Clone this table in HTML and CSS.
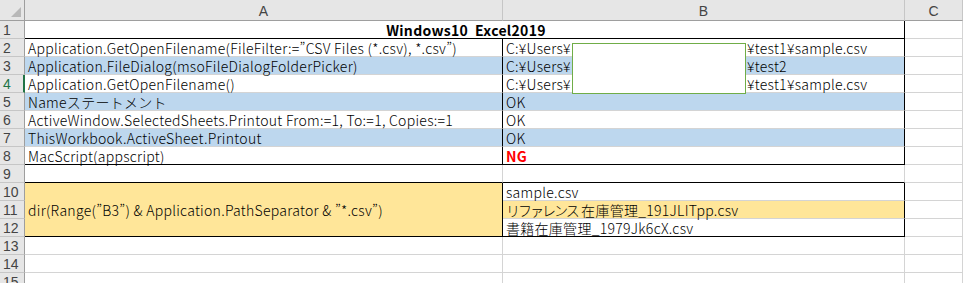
FILE: index.html
```html
<!DOCTYPE html>
<html lang="ja">
<head>
<meta charset="utf-8">
<link rel="stylesheet" href="styles.css">
</head>
<body>
<div class="sheet">
  <div class="grid">
    <div class="hd corner"><span class="tri"></span></div>
    <div class="hd col">A</div>
    <div class="hd col">B</div>
    <div class="hd col">C</div>

    <div class="hd rn">1</div>
    <div class="c title span2 bb br">Windows10&nbsp; Excel2019</div>
    <div class="c"></div>

    <div class="hd rn">2</div>
    <div class="c br">Application.GetOpenFilename(FileFilter:=”CSV Files (*.csv), *.csv”)</div>
    <div class="c br"><span class="lead">C:¥Users¥</span><span>¥test1¥sample.csv</span></div>
    <div class="c"></div>

    <div class="hd rn">3</div>
    <div class="c br blue">Application.FileDialog(msoFileDialogFolderPicker)</div>
    <div class="c br blue"><span class="lead">C:¥Users¥</span><span>¥test2</span></div>
    <div class="c"></div>

    <div class="hd rn sel">4</div>
    <div class="c br">Application.GetOpenFilename()</div>
    <div class="c br"><span class="lead">C:¥Users¥</span><span>¥test1¥sample.csv</span></div>
    <div class="c"></div>

    <div class="hd rn">5</div>
    <div class="c br blue">Nameステートメント</div>
    <div class="c br blue">OK</div>
    <div class="c"></div>

    <div class="hd rn">6</div>
    <div class="c br">ActiveWindow.SelectedSheets.Printout From:=1, To:=1, Copies:=1</div>
    <div class="c br">OK</div>
    <div class="c"></div>

    <div class="hd rn">7</div>
    <div class="c br blue">ThisWorkbook.ActiveSheet.Printout</div>
    <div class="c br blue">OK</div>
    <div class="c"></div>

    <div class="hd rn">8</div>
    <div class="c br bb">MacScript(appscript)</div>
    <div class="c br bb ng">NG</div>
    <div class="c"></div>

    <div class="hd rn">9</div>
    <div class="c bb"></div>
    <div class="c bb"></div>
    <div class="c"></div>

    <div class="hd rn">10</div>
    <div class="c br bb yellow merged">dir(Range(”B3”) &amp; Application.PathSeparator &amp; ”*.csv”)</div>
    <div class="c br">sample.csv</div>
    <div class="c"></div>

    <div class="hd rn">11</div>
    <div class="c br yellow"><span class="kana">リファレンス</span>&nbsp;在庫管理_191JLITpp.csv</div>
    <div class="c"></div>

    <div class="hd rn">12</div>
    <div class="c br bb">書籍在庫管理_1979Jk6cX.csv</div>
    <div class="c"></div>

    <div class="hd rn">13</div>
    <div class="c"></div>
    <div class="c"></div>
    <div class="c"></div>

    <div class="hd rn">14</div>
    <div class="c"></div>
    <div class="c"></div>
    <div class="c"></div>

    <div class="hd rn">15</div>
    <div class="c"></div>
    <div class="c"></div>
    <div class="c"></div>
  </div>
  <div class="paste"></div>
</div>
</body>
</html>
```

FILE: styles.css
```css
html, body {
  margin: 0;
  padding: 0;
  background: #ffffff;
}

body {
  font-family: "Noto Sans CJK JP", "Liberation Sans", sans-serif;
  font-size: 14px;
  font-weight: 300;
  color: #000;
}

.sheet {
  position: relative;
  width: 963px;
  height: 283px;
  overflow: hidden;
}

.grid {
  display: grid;
  grid-template-columns: 25px 478px 402px 1fr;
  grid-template-rows: 21px repeat(15, 18px);
}

.hd {
  background: #e6e6e6;
  color: #444;
  box-sizing: border-box;
  display: flex;
  align-items: center;
  justify-content: center;
  font-family: "Liberation Sans", sans-serif;
  font-weight: 400;
  font-size: 14px;
  line-height: 16px;
}

.corner {
  border-right: 1px solid #9e9e9e;
  border-bottom: 1px solid #9e9e9e;
  position: relative;
}

.tri {
  position: absolute;
  right: 3px;
  bottom: 3px;
  width: 0;
  height: 0;
  border-left: 10px solid transparent;
  border-bottom: 10px solid #b8b8b8;
}

.col {
  border-right: 1px solid #c6c6c6;
  border-bottom: 1px solid #9e9e9e;
  padding-top: 2px;
}

.rn {
  border-right: 1px solid #9e9e9e;
  border-bottom: 1px solid #c6c6c6;
  justify-content: flex-start;
  padding-left: 3px;
  padding-top: 1px;
}

.rn.sel {
  color: #217346;
  border-right: 2px solid #217346;
}

.c {
  box-sizing: border-box;
  border-right: 1px solid #d4d4d4;
  border-bottom: 1px solid #d4d4d4;
  padding-left: 3px;
  line-height: 16px;
  letter-spacing: 0.28px;
  white-space: nowrap;
  display: flex;
  align-items: center;
}

.span2 {
  grid-column: span 2;
}

.title {
  justify-content: center;
  font-weight: bold;
  font-size: 14px;
  letter-spacing: 0.3px;
}

.br {
  border-right-color: #000;
}

.bb {
  border-bottom-color: #000;
}

.blue {
  background: #bdd7ee;
}

.yellow {
  background: #ffe699;
}

.merged {
  grid-row: span 3;
}

.ng {
  color: #ff0000;
  font-weight: bold;
}

.kana {
  letter-spacing: -2px;
}

.lead {
  display: inline-block;
  width: 241px;
}

.paste {
  position: absolute;
  left: 572px;
  top: 43px;
  width: 174px;
  height: 51px;
  box-sizing: border-box;
  border: 1px solid #70ad47;
  background: #ffffff;
}
```
